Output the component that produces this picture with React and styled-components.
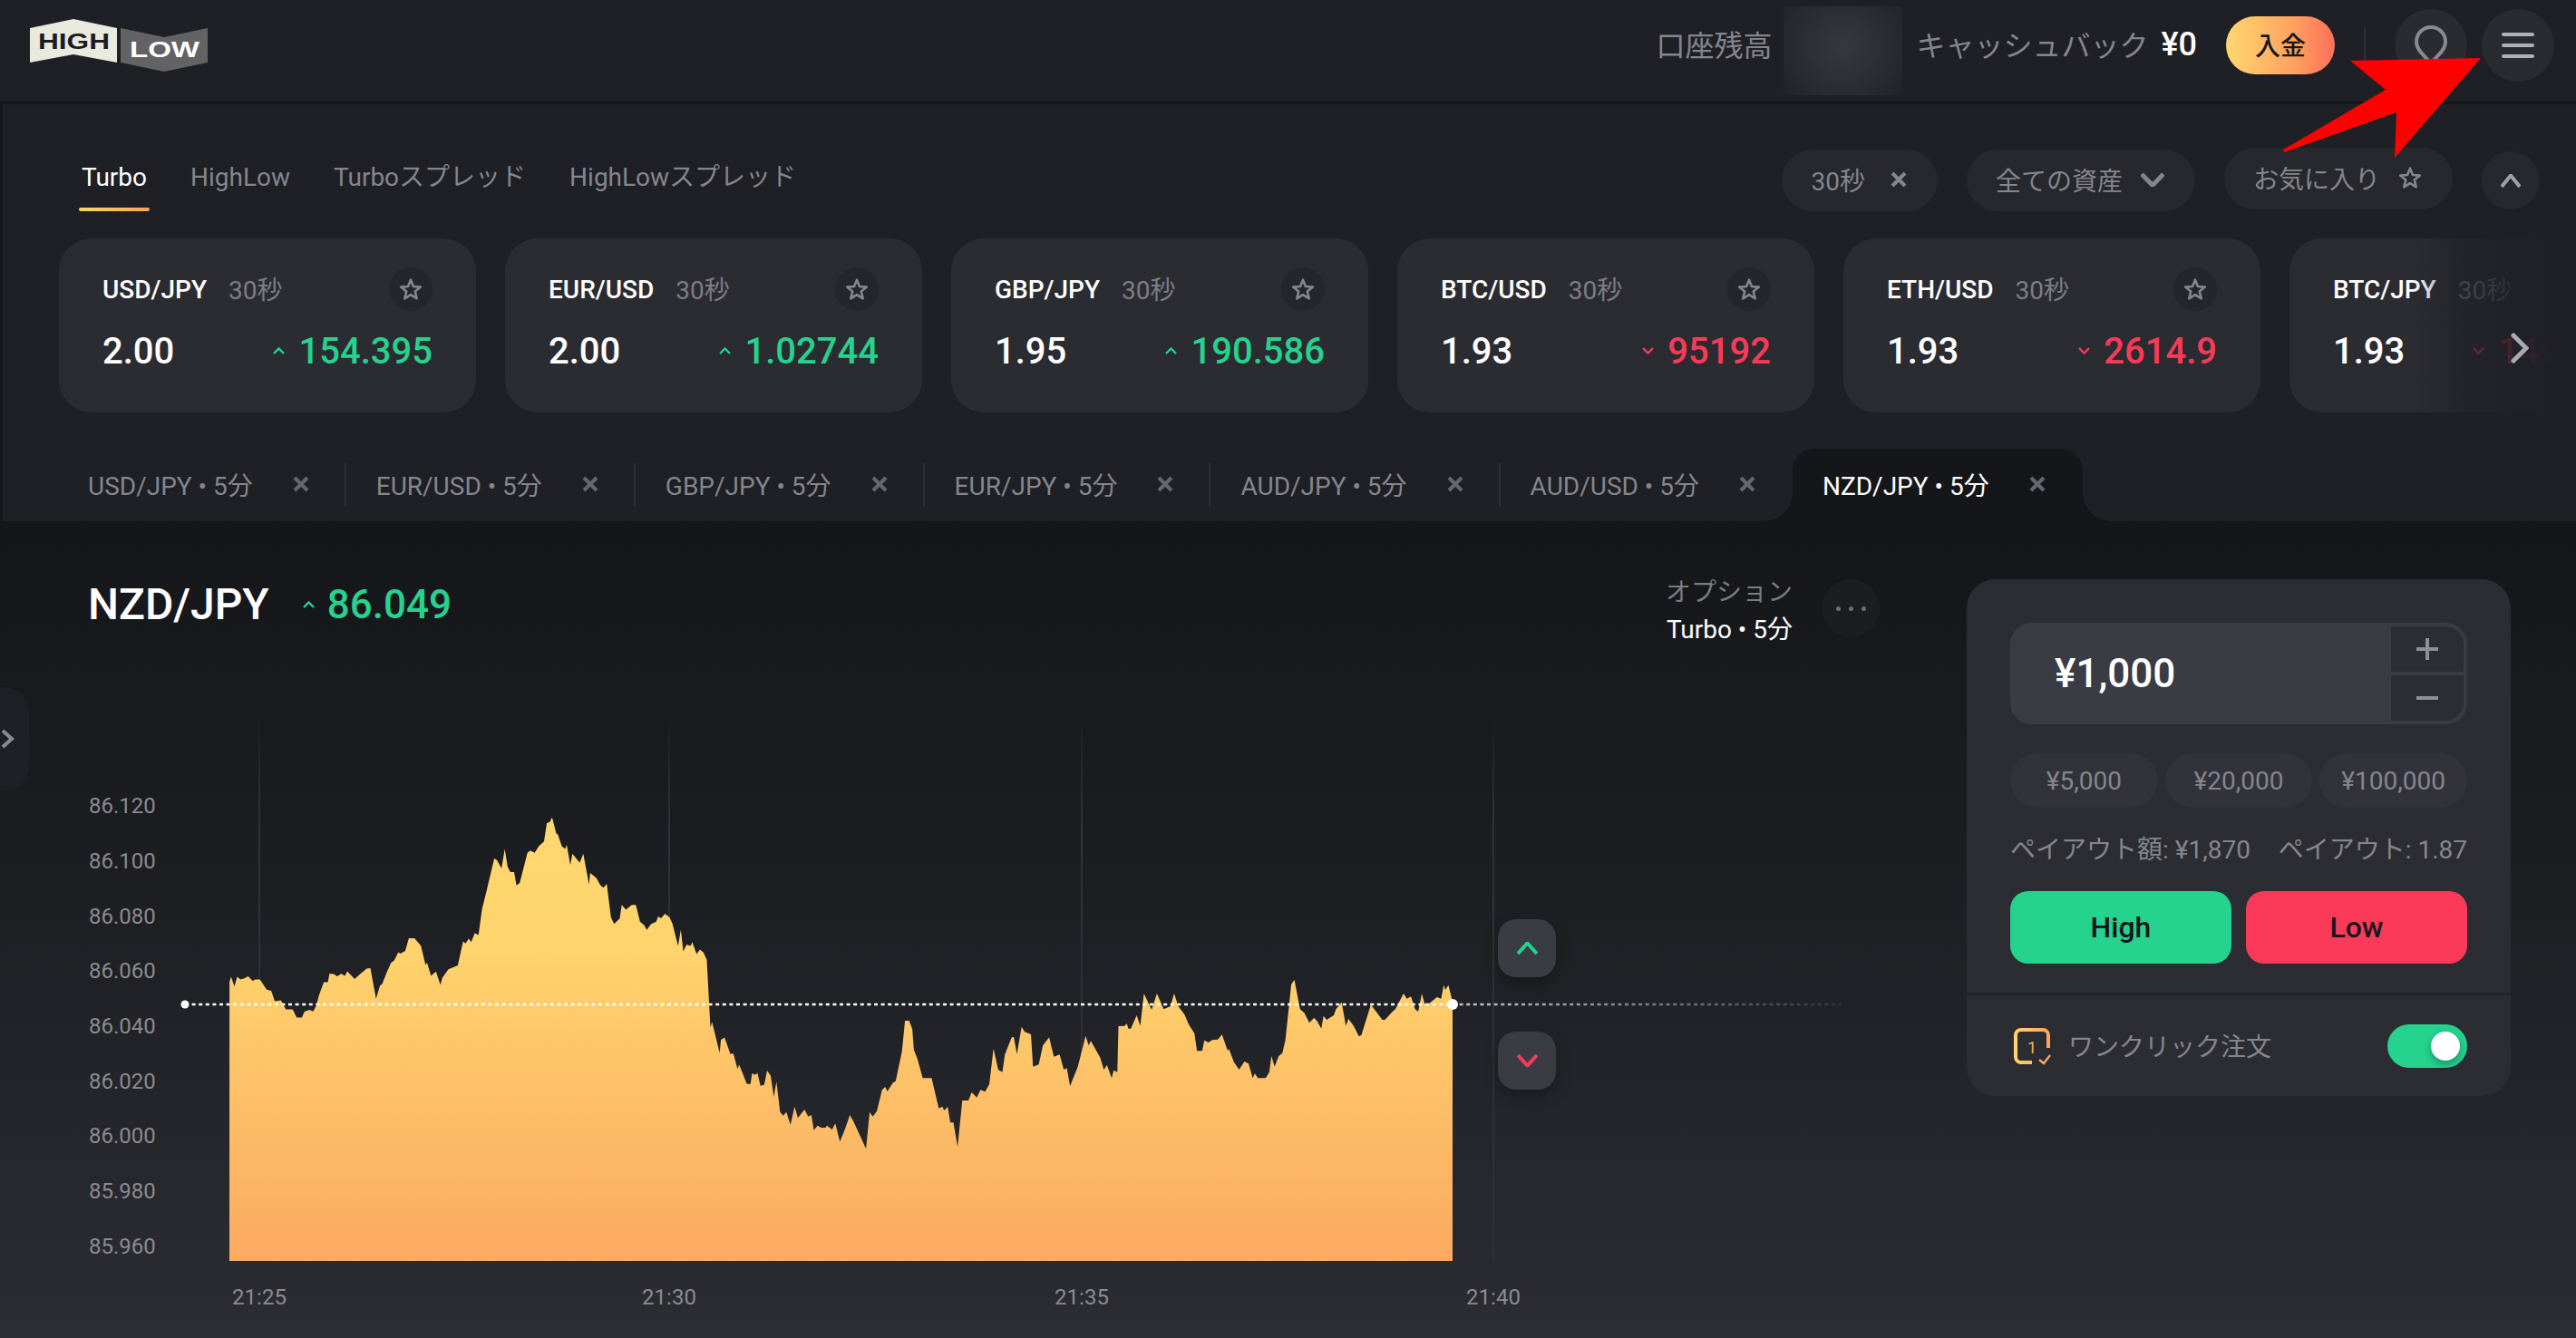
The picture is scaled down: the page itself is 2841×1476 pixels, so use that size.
import React from 'react';
import styled, { createGlobalStyle } from 'styled-components';

const GREEN = '#25d28e';
const RED = '#fb3a5a';
const GRAY = '#85868d';

const QUOTES = [
	{ pair: 'USD/JPY', rate: '2.00', price: '154.395', up: true },
	{ pair: 'EUR/USD', rate: '2.00', price: '1.02744', up: true },
	{ pair: 'GBP/JPY', rate: '1.95', price: '190.586', up: true },
	{ pair: 'BTC/USD', rate: '1.93', price: '95192', up: false },
	{ pair: 'ETH/USD', rate: '1.93', price: '2614.9', up: false },
	{ pair: 'BTC/JPY', rate: '1.93', price: '14935120', up: false },
];

const OPEN_TABS = ['USD/JPY', 'EUR/USD', 'GBP/JPY', 'EUR/JPY', 'AUD/JPY', 'AUD/USD'];

const Y_LABELS = [
	['86.120', 888],
	['86.100', 949],
	['86.080', 1010],
	['86.060', 1070],
	['86.040', 1131],
	['86.020', 1192],
	['86.000', 1252],
	['85.980', 1313],
	['85.960', 1374],
];

const X_LABELS = [
	['21:25', 286],
	['21:30', 738],
	['21:35', 1193],
	['21:40', 1647],
];

// price line, first half then second half, each in its own trace scale
const TRACE_A = [
	231, 680, 235, 665, 243, 695, 250, 665, 258, 673, 268, 670, 277, 664, 288, 678, 295, 673, 306, 673, 323, 705, 334, 708,
	343, 741, 358, 738, 370, 766, 387, 766, 397, 791, 410, 791, 416, 773, 428, 767, 438, 772, 445, 755, 452, 722, 464, 682,
	474, 682, 478, 655, 488, 657, 497, 664, 507, 656, 516, 662, 522, 648, 540, 672, 555, 655, 570, 640, 579, 638, 593, 733,
	603, 692, 608, 688, 620, 650, 630, 622, 638, 615, 648, 589, 653, 594, 665, 585, 674, 546, 688, 546, 704, 570, 715, 628,
	719, 622, 729, 662, 741, 649, 752, 690, 757, 668, 772, 642, 795, 630, 808, 556, 814, 562, 822, 547, 828, 558, 837, 530,
	846, 536, 855, 455, 865, 405, 885, 300, 892, 305, 903, 330, 911, 270, 918, 325, 925, 342, 934, 342, 940, 383, 948, 375,
	967, 282, 974, 275, 985, 282, 995, 262, 1008, 247, 1015, 190, 1022, 187, 1028, 173, 1038, 222, 1042, 225, 1052, 262,
	1060, 270, 1064, 258, 1073, 320, 1078, 285, 1096, 313, 1105, 285, 1119, 380, 1122, 344, 1137, 360, 1147, 382, 1155, 390,
	1163, 378, 1173, 480, 1181, 502, 1195, 485, 1200, 443, 1210, 458, 1225, 443, 1235, 443, 1245, 495, 1255, 505, 1262, 520,
	1272, 503, 1285, 495, 1290, 479, 1297, 484, 1307, 470, 1318, 482, 1325, 500, 1339, 570, 1346, 520, 1352, 587, 1360, 566,
	1370, 570, 1374, 558, 1385, 595, 1393, 581, 1402, 590, 1410, 613, 1416, 750, 1419, 822, 1423, 805, 1442, 900, 1445, 860,
	1454, 853, 1468, 903, 1476, 903, 1486, 950, 1490, 937, 1509, 996, 1518, 996, 1522, 963, 1530, 968, 1535, 962, 1543, 1002,
	1552, 998, 1559, 955,
];

const TRACE_B = [
	0, 680, 6, 750, 11, 700, 18, 800, 24, 812, 30, 800, 38, 842, 46, 782, 52, 820, 65, 792, 72, 815, 78, 810, 83, 860, 90, 845,
	97, 852, 105, 852, 108, 845, 118, 858, 124, 838, 133, 898, 142, 860, 152, 810, 160, 835, 172, 880, 183, 922, 190, 800,
	196, 815, 204, 797, 214, 727, 220, 717, 224, 732, 235, 703, 240, 698, 252, 600, 258, 498, 266, 498, 272, 525, 275, 595,
	282, 625, 292, 688, 309, 688, 323, 788, 330, 782, 333, 795, 340, 783, 345, 835, 351, 835, 359, 915, 368, 762, 380, 762,
	386, 735, 396, 752, 403, 727, 412, 733, 420, 708, 428, 590, 437, 660, 445, 668, 450, 610, 463, 553, 467, 552, 473, 608,
	482, 518, 488, 535, 500, 543, 504, 650, 515, 643, 523, 580, 535, 553, 544, 617, 555, 610, 563, 660, 569, 655, 575, 715,
	590, 650, 605, 548, 611, 580, 615, 565, 633, 620, 640, 660, 646, 645, 655, 688, 659, 662, 666, 668, 668, 516, 680, 515,
	684, 507, 687, 524, 692, 524, 703, 480, 710, 515, 717, 408, 732, 462, 742, 408, 755, 460, 768, 450, 775, 408, 783, 450,
	795, 478, 803, 510, 814, 540, 819, 598, 829, 598, 833, 563, 841, 570, 848, 562, 859, 560, 867, 544, 878, 598, 880, 590,
	890, 635, 900, 660, 910, 633, 918, 640, 926, 688, 930, 673, 936, 688, 951, 688, 958, 668, 962, 615, 968, 650, 976, 615,
	983, 605, 989, 560, 1000, 378, 1006, 362, 1017, 460, 1025, 472, 1035, 505, 1044, 488, 1050, 500, 1058, 524, 1062, 482,
	1068, 495, 1082, 480, 1086, 460, 1097, 437, 1105, 515, 1110, 492, 1120, 515, 1130, 550, 1135, 545, 1153, 445, 1175, 495,
	1180, 495, 1195, 467, 1200, 460, 1216, 408, 1222, 425, 1230, 418, 1238, 460, 1244, 468, 1251, 408, 1256, 440, 1262, 445,
	1280, 420, 1288, 425, 1293, 380, 1296, 396, 1302, 380, 1310, 435,
];

const toPoints = (flat, x0, sx, y0, sy) => {
	const pts = [];
	for (let i = 0; i < flat.length; i += 2) {
		pts.push(`${(x0 + flat[i] / sx).toFixed(1)},${(y0 + flat[i + 1] / sy).toFixed(1)}`);
	}
	return pts;
};

const PRICE_POINTS = [...toPoints(TRACE_A, 150, 2.24, 840, 2.8), ...toPoints(TRACE_B, 850, 1.742, 960, 3)];
const AREA = `M253,1391 L${PRICE_POINTS.join(' L')} L1602,1391 Z`;

const Caret = ({ up, w = 13, h = 8, width = 2.4, color }) => (
	<svg width={w} height={h} viewBox={`0 0 ${w} ${h}`} fill='none'>
		<polyline
			points={up ? `1,${h - 1} ${w / 2},1.5 ${w - 1},${h - 1}` : `1,1 ${w / 2},${h - 1.5} ${w - 1},1`}
			stroke={color}
			strokeWidth={width}
		/>
	</svg>
);

const CloseIcon = ({ color = '#66676d' }) => (
	<svg width='18' height='18' viewBox='0 0 18 18'>
		<path d='M2 2 L16 16 M16 2 L2 16' stroke={color} strokeWidth='4' />
	</svg>
);

const FavIcon = () => (
	<svg width='26' height='26' viewBox='0 0 24 24' fill='none'>
		<polygon
			points='12,2.5 14.7,9.3 22,9.8 16.4,14.4 18.2,21.5 12,17.6 5.8,21.5 7.6,14.4 2,9.8 9.3,9.3'
			stroke={GRAY}
			strokeWidth='2.4'
			strokeLinejoin='round'
		/>
	</svg>
);

const Logo = () => (
	<svg width='196' height='58' viewBox='33 21 196 58'>
		<path d='M33 31 L81 21 L129 31 V69 L81 60 L33 69 Z' fill='#e9e9dd' />
		<path d='M133 31 L181 41 L229 31 V69 L181 79 L133 69 Z' fill='#636365' />
		<LogoText x='42' y='54' textLength='79' lengthAdjust='spacingAndGlyphs' fill='#1b1c20'>
			HIGH
		</LogoText>
		<LogoText x='143' y='63' textLength='77' lengthAdjust='spacingAndGlyphs' fill='#ffffff'>
			LOW
		</LogoText>
	</svg>
);

const PinIcon = () => (
	<svg width='36' height='44' viewBox='0 0 36 44' fill='none'>
		<path
			d='M18 2 C9 2 2 9 2 18 C2 24 5 28 9 32 L18 42 L27 32 C31 28 34 24 34 18 C34 9 27 2 18 2 Z'
			stroke='#8a8b91'
			strokeWidth='4'
		/>
	</svg>
);

const OneClickIcon = () => (
	<OneClickSvg width='40' height='40' viewBox='0 0 40 40' fill='none'>
		<defs>
			<linearGradient id='oneClick' x1='0' y1='0' x2='1' y2='0'>
				<stop offset='0' stopColor='#ffd56d' />
				<stop offset='1' stopColor='#fba55f' />
			</linearGradient>
		</defs>
		<path
			d='M20 38 H8 A6 6 0 0 1 2 32 V8 A6 6 0 0 1 8 2 H32 A6 6 0 0 1 38 8 V22'
			stroke='url(#oneClick)'
			strokeWidth='4'
		/>
		<OneText x='20' y='28' textAnchor='middle'>
			1
		</OneText>
		<path d='M28 35 L33 39 L40 30' stroke='#fba55f' strokeWidth='2.4' />
	</OneClickSvg>
);

const PriceChart = () => (
	<ChartSvg width='2169' height='756' viewBox='0 720 2169 756'>
		<defs>
			<linearGradient id='area' x1='0' y1='902' x2='0' y2='1391' gradientUnits='userSpaceOnUse'>
				<stop offset='0' stopColor='#ffd86f' />
				<stop offset='0.3' stopColor='#ffd36d' />
				<stop offset='1' stopColor='#fbaa61' />
			</linearGradient>
			<linearGradient id='grid' x1='0' y1='780' x2='0' y2='900' gradientUnits='userSpaceOnUse'>
				<stop offset='0' stopColor='#303136' stopOpacity='0' />
				<stop offset='1' stopColor='#303136' />
			</linearGradient>
			<linearGradient id='lineFade' x1='1602' y1='0' x2='2030' y2='0' gradientUnits='userSpaceOnUse'>
				<stop offset='0' stopColor='#c8c8cc' />
				<stop offset='1' stopColor='#c8c8cc' stopOpacity='0.1' />
			</linearGradient>
		</defs>
		{X_LABELS.map(([, x]) => (
			<line key={x} x1={x} x2={x} y1='780' y2='1391' stroke='url(#grid)' strokeWidth='2' />
		))}
		<path d={AREA} fill='url(#area)' />
		<line x1='204' x2='1602' y1='1108' y2='1108' stroke='#ffffff' strokeWidth='2.5' strokeDasharray='4 3.6' />
		<line x1='1602' x2='2030' y1='1108' y2='1108' stroke='url(#lineFade)' strokeWidth='2.5' strokeDasharray='4 3.6' />
		<circle cx='204' cy='1108' r='4.5' fill='#ffffff' />
		<circle cx='1602' cy='1108' r='6' fill='#ffffff' />
		{Y_LABELS.map(([label, y]) => (
			<AxisText key={label} x='98' y={y + 9}>
				{label}
			</AxisText>
		))}
		{X_LABELS.map(([label, x]) => (
			<AxisText key={label} x={x} y='1439' textAnchor='middle'>
				{label}
			</AxisText>
		))}
	</ChartSvg>
);

const QuoteCard = ({ pair, rate, price, up }) => (
	<Card>
		<CardTop>
			<Pair>{pair}</Pair>
			<Period>30秒</Period>
			<StarButton>
				<FavIcon />
			</StarButton>
		</CardTop>
		<CardBottom>
			<Rate>{rate}</Rate>
			<Price $up={up}>
				<Caret up={up} color={up ? GREEN : RED} />
				{price}
			</Price>
		</CardBottom>
	</Card>
);

const App = () => {
	return (
		<Page>
			<GlobalStyle />
			<Header>
				<Logo />
				<HeaderRight>
					<Balance>口座残高</Balance>
					<BlurredAmount />
					<Balance>キャッシュバック</Balance>
					<Cashback>¥0</Cashback>
					<DepositButton>入金</DepositButton>
					<HeaderDivider />
					<RoundButton>
						<PinIcon />
					</RoundButton>
					<RoundButton>
						<MenuLines>
							<span />
							<span />
							<span />
						</MenuLines>
					</RoundButton>
				</HeaderRight>
			</Header>

			<Markets>
				<FilterRow>
					<ProductTabs>
						<ProductTab $active>Turbo</ProductTab>
						<ProductTab>HighLow</ProductTab>
						<ProductTab>Turboスプレッド</ProductTab>
						<ProductTab>HighLowスプレッド</ProductTab>
					</ProductTabs>
					<Filters>
						<Pill $gap={28}>
							30秒
							<CloseIcon color='#85868d' />
						</Pill>
						<Pill>
							全ての資産
							<Caret w={26} h={15} width={5} color='#85868d' />
						</Pill>
						<Pill $raised>
							お気に入り
							<FavIcon />
						</Pill>
						<CollapseButton>
							<Caret up w={22} h={15} width={4} color='#a0a1a7' />
						</CollapseButton>
					</Filters>
				</FilterRow>

				<CardRow>
					{QUOTES.map((quote) => (
						<QuoteCard key={quote.pair} {...quote} />
					))}
					<CardFade />
					<NextButton>
						<svg width='20' height='34' viewBox='0 0 20 34' fill='none'>
							<polyline points='3,3 17,17 3,31' stroke='#aaabaf' strokeWidth='5' strokeLinecap='round' />
						</svg>
					</NextButton>
				</CardRow>

				<TabStrip>
					{OPEN_TABS.map((name, i) => (
						<React.Fragment key={name}>
							<OpenTab>
								{name} • 5分
								<CloseIcon />
							</OpenTab>
							{i < OPEN_TABS.length - 1 && <TabDivider />}
						</React.Fragment>
					))}
					<ActiveTab>
						NZD/JPY • 5分
						<CloseIcon />
					</ActiveTab>
				</TabStrip>
			</Markets>

			<Trading>
				<SideHandle>
					<svg width='16' height='22' viewBox='0 0 16 22' fill='none'>
						<polyline points='3,2 13,11 3,20' stroke='#8a8b91' strokeWidth='4' />
					</svg>
				</SideHandle>
				<ChartColumn>
					<ChartHead>
						<TitleGroup>
							<ChartTitle>NZD/JPY</ChartTitle>
							<ChartPrice>
								<Caret up color={GREEN} />
								86.049
							</ChartPrice>
						</TitleGroup>
						<OptionInfo>
							<OptionLabel>オプション</OptionLabel>
							<OptionValue>Turbo • 5分</OptionValue>
						</OptionInfo>
						<MoreButton>
							<span />
							<span />
							<span />
						</MoreButton>
					</ChartHead>
					<ChartWrap>
						<PriceChart />
						<MiniTrade $top={294}>
							<Caret up w={23} h={14} width={4} color={GREEN} />
						</MiniTrade>
						<MiniTrade $top={418}>
							<Caret w={23} h={14} width={4} color={RED} />
						</MiniTrade>
					</ChartWrap>
				</ChartColumn>

				<TradePanel>
					<PanelBody>
						<AmountBox>
							<Amount>¥1,000</Amount>
							<Stepper>
								<StepButton $plus>
									<svg width='24' height='24' viewBox='0 0 24 24'>
										<path d='M0 12 H24 M12 0 V24' stroke='#8f9096' strokeWidth='4' />
									</svg>
								</StepButton>
								<StepButton>
									<svg width='24' height='4' viewBox='0 0 24 4'>
										<path d='M0 2 H24' stroke='#8f9096' strokeWidth='4' />
									</svg>
								</StepButton>
							</Stepper>
						</AmountBox>
						<Presets>
							<Preset>¥5,000</Preset>
							<Preset>¥20,000</Preset>
							<Preset>¥100,000</Preset>
						</Presets>
						<Payout>
							<span>ペイアウト額: ¥1,870</span>
							<span>ペイアウト: 1.87</span>
						</Payout>
						<TradeButtons>
							<TradeButton $color={GREEN}>High</TradeButton>
							<TradeButton $color={RED}>Low</TradeButton>
						</TradeButtons>
					</PanelBody>
					<PanelFooter>
						<OneClickIcon />
						<OneClickLabel>ワンクリック注文</OneClickLabel>
						<Toggle>
							<Knob />
						</Toggle>
					</PanelFooter>
				</TradePanel>
			</Trading>

			<ArrowOverlay width='240' height='120' viewBox='2510 60 240 120'>
				<polygon points='2736,64 2592,67 2631,99 2518,165 2519,168 2643,124 2641,174' fill='#ff0000' />
			</ArrowOverlay>
		</Page>
	);
};

export default App;

const GlobalStyle = createGlobalStyle`
	* {
		box-sizing: border-box;
	}
	html, body {
		margin: 0;
		background: #1e2025;
	}
	body {
		font-family: Roboto, 'Noto Sans CJK JP', sans-serif;
		overflow: hidden;
	}
`;

const Page = styled.div`
	position: relative;
	width: 2841px;
	height: 1476px;
	display: flex;
	flex-direction: column;
	background: #1e2025;
	overflow: hidden;
`;

const LogoText = styled.text`
	font-family: 'Liberation Sans', sans-serif;
	font-weight: 700;
	font-size: 24px;
`;

const OneClickSvg = styled.svg`
	overflow: visible;
	flex-shrink: 0;
`;

const OneText = styled.text`
	font-size: 18px;
	fill: #f8b15f;
`;

const ChartSvg = styled.svg`
	display: block;
`;

const AxisText = styled.text`
	font-size: 24px;
	fill: #8a8b91;
`;

const Header = styled.header`
	height: 115px;
	flex-shrink: 0;
	display: flex;
	align-items: center;
	justify-content: space-between;
	padding: 0 24px 12px 33px;
	border-bottom: 3px solid #15161a;
`;

const HeaderRight = styled.div`
	display: flex;
	align-items: center;
`;

const Balance = styled.span`
	margin-bottom: 5px;
	font-size: 32px;
	color: ${GRAY};
`;

const BlurredAmount = styled.div`
	width: 131px;
	height: 98px;
	margin: 12px 15px 0 13px;
	background: radial-gradient(circle at 50% 45%, #37383d 0%, #2f3035 40%, #212328 100%);
`;

const Cashback = styled.span`
	margin: 0 32px 2px 14px;
	font-size: 36px;
	font-weight: 500;
	color: #ffffff;
`;

const DepositButton = styled.button`
	width: 120px;
	height: 64px;
	padding: 0 0 3px;
	border: 0;
	border-radius: 32px;
	font: inherit;
	font-size: 28px;
	font-weight: 500;
	color: #16171b;
	background: linear-gradient(90deg, #ffd76f 0%, #ffa460 60%, #ff6f5a 100%);
`;

const HeaderDivider = styled.div`
	width: 2px;
	height: 42px;
	margin: 0 16px 0 32px;
	background: #2e2f35;
`;

const RoundButton = styled.div`
	width: 80px;
	height: 80px;
	margin-left: 16px;
	border-radius: 50%;
	display: flex;
	align-items: center;
	justify-content: center;
	background: #2a2b30;
`;

const MenuLines = styled.div`
	display: flex;
	flex-direction: column;
	gap: 8px;
	span {
		display: block;
		width: 36px;
		height: 4px;
		border-radius: 2px;
		background: #b0b1b8;
	}
`;

const Markets = styled.section`
	flex-shrink: 0;
	padding-top: 50px;
	border-left: 3px solid #15161a;
`;

const FilterRow = styled.div`
	display: flex;
	align-items: center;
	justify-content: space-between;
	height: 68px;
	padding: 0 40px 0 84px;
`;

const ProductTabs = styled.nav`
	display: flex;
	gap: 42px;
	height: 68px;
`;

const ProductTab = styled.div`
	position: relative;
	padding: 12px 3px 0;
	font-size: 28px;
	line-height: 38px;
	color: ${(p) => (p.$active ? '#ffffff' : GRAY)};
	&::after {
		content: '';
		display: ${(p) => (p.$active ? 'block' : 'none')};
		position: absolute;
		left: 0;
		right: 0;
		bottom: 0;
		height: 4px;
		border-radius: 2px;
		background: linear-gradient(90deg, #ffd56d, #ffa25d);
	}
`;

const Filters = styled.div`
	display: flex;
	align-items: center;
	gap: 32px;
`;

const Pill = styled.div`
	height: 68px;
	padding: 0 34px 2px 32px;
	margin-bottom: ${(p) => (p.$raised ? '4px' : '0')};
	display: flex;
	align-items: center;
	gap: ${(p) => p.$gap || 20}px;
	border-radius: 34px;
	font-size: 28px;
	color: ${GRAY};
	background: #26282d;
`;

const CollapseButton = styled.div`
	width: 64px;
	height: 64px;
	border-radius: 50%;
	display: flex;
	align-items: center;
	justify-content: center;
	background: #26282d;
`;

const CardRow = styled.div`
	position: relative;
	display: flex;
	gap: 32px;
	height: 192px;
	margin-top: 30px;
	padding-left: 62px;
	overflow: hidden;
`;

const Card = styled.article`
	flex: 0 0 460px;
	height: 192px;
	padding: 32px 48px 0;
	border-radius: 36px;
	background: #2b2c32;
`;

const CardTop = styled.div`
	display: flex;
	align-items: center;
	height: 48px;
`;

const Pair = styled.span`
	font-size: 28px;
	font-weight: 500;
	color: #ffffff;
`;

const Period = styled.span`
	margin-left: 24px;
	padding-bottom: 2px;
	font-size: 28px;
	color: #7c7d84;
`;

const StarButton = styled.div`
	width: 48px;
	height: 48px;
	margin-left: auto;
	border-radius: 50%;
	display: flex;
	align-items: center;
	justify-content: center;
	background: #25262b;
`;

const CardBottom = styled.div`
	display: flex;
	align-items: center;
	justify-content: space-between;
	height: 48px;
	margin-top: 20px;
`;

const Rate = styled.span`
	font-size: 40px;
	font-weight: 500;
	color: #ffffff;
`;

const Price = styled.span`
	display: flex;
	align-items: center;
	gap: 15px;
	font-size: 40px;
	font-weight: 500;
	color: ${(p) => (p.$up ? GREEN : RED)};
`;

const CardFade = styled.div`
	position: absolute;
	top: 0;
	right: 0;
	bottom: 0;
	width: 180px;
	background: linear-gradient(
		90deg,
		rgba(30, 32, 37, 0) 0%,
		rgba(30, 32, 37, 0.6) 30%,
		rgba(30, 32, 37, 0.85) 60%,
		#1e2025 85%
	);
`;

const NextButton = styled.div`
	position: absolute;
	top: 104px;
	left: 2766px;
	display: flex;
`;

const TabStrip = styled.div`
	display: flex;
	align-items: center;
	height: 120px;
	padding: 40px 0 0 61px;
`;

const OpenTab = styled.div`
	display: flex;
	align-items: center;
	gap: 44px;
	padding: 0 39px 2px 33px;
	font-size: 28px;
	color: ${GRAY};
	white-space: pre;
`;

const TabDivider = styled.div`
	width: 2px;
	height: 48px;
	background: #2e2f35;
`;

const ActiveTab = styled.div`
	position: relative;
	height: 80px;
	width: 320px;
	margin-left: 2px;
	display: flex;
	align-items: center;
	gap: 44px;
	padding: 0 0 2px 33px;
	border-radius: 24px 24px 0 0;
	font-size: 28px;
	color: #ffffff;
	background: #15161a;
	&::before,
	&::after {
		content: '';
		position: absolute;
		bottom: 0;
		width: 32px;
		height: 32px;
	}
	&::before {
		left: -32px;
		background: radial-gradient(circle at 0 0, transparent 31.5px, #15161a 32px);
	}
	&::after {
		right: -32px;
		background: radial-gradient(circle at 100% 0, transparent 31.5px, #15161a 32px);
	}
`;

const Trading = styled.main`
	position: relative;
	flex: 1;
	display: flex;
	padding-top: 64px;
	background: linear-gradient(180deg, #15161a 0%, #1c1d21 40%, #2c2d32 100%);
`;

const SideHandle = styled.div`
	position: absolute;
	left: 0;
	top: 183px;
	width: 32px;
	height: 114px;
	display: flex;
	align-items: center;
	border-radius: 0 28px 28px 0;
	background: #1e2025;
`;

const ChartColumn = styled.div`
	flex: 0 0 2169px;
	display: flex;
	flex-direction: column;
`;

const ChartHead = styled.div`
	display: flex;
	align-items: center;
	height: 64px;
	padding: 0 96px 0 97px;
`;

const TitleGroup = styled.div`
	display: flex;
	align-items: center;
	gap: 37px;
	margin: 0 auto 8px 0;
`;

const ChartTitle = styled.h1`
	margin: 0;
	font-size: 48px;
	font-weight: 500;
	line-height: 54px;
	color: #ffffff;
`;

const ChartPrice = styled.div`
	display: flex;
	align-items: center;
	gap: 14px;
	font-size: 44px;
	font-weight: 500;
	color: ${GREEN};
`;

const OptionInfo = styled.div`
	text-align: right;
	font-size: 28px;
	line-height: 41px;
	margin: 5px 32px 0 0;
`;

const OptionLabel = styled.div`
	color: #7c7d84;
`;

const OptionValue = styled.div`
	color: #ffffff;
`;

const MoreButton = styled.div`
	width: 64px;
	height: 64px;
	border-radius: 50%;
	display: flex;
	align-items: center;
	justify-content: center;
	gap: 9px;
	background: #1c1d21;
	span {
		width: 5px;
		height: 5px;
		border-radius: 50%;
		background: #6e6f75;
	}
`;

const ChartWrap = styled.div`
	position: relative;
	margin-top: 17px;
`;

const MiniTrade = styled.div`
	position: absolute;
	left: 1652px;
	top: ${(p) => p.$top}px;
	width: 64px;
	height: 64px;
	display: flex;
	align-items: center;
	justify-content: center;
	border-radius: 20px;
	background: #3a3c44;
	box-shadow: 0 8px 16px rgba(0, 0, 0, 0.25);
`;

const TradePanel = styled.aside`
	width: 600px;
	height: 570px;
	border-radius: 32px;
	overflow: hidden;
	background: #2c2d33;
`;

const PanelBody = styled.div`
	padding: 48px 48px 32px;
`;

const AmountBox = styled.div`
	display: flex;
	align-items: center;
	justify-content: space-between;
	height: 112px;
	padding: 4px 4px 4px 49px;
	border-radius: 24px;
	background: #3a3c44;
`;

const Amount = styled.span`
	font-size: 44px;
	font-weight: 500;
	color: #ffffff;
`;

const Stepper = styled.div`
	display: flex;
	flex-direction: column;
	gap: 4px;
	width: 80px;
	height: 104px;
`;

const StepButton = styled.div`
	flex: 1;
	display: flex;
	align-items: center;
	justify-content: center;
	background: #2c2d33;
	border-radius: ${(p) => (p.$plus ? '0 20px 0 0' : '0 0 20px 0')};
`;

const Presets = styled.div`
	display: grid;
	grid-template-columns: repeat(3, 1fr);
	gap: 8px;
	margin-top: 32px;
`;

const Preset = styled.div`
	height: 60px;
	display: flex;
	align-items: center;
	justify-content: center;
	border-radius: 30px;
	font-size: 28px;
	color: ${GRAY};
	background: #32333a;
`;

const Payout = styled.div`
	display: flex;
	justify-content: space-between;
	margin-top: 30px;
	font-size: 28px;
	line-height: 34px;
	color: ${GRAY};
	white-space: nowrap;
`;

const TradeButtons = styled.div`
	display: grid;
	grid-template-columns: 1fr 1fr;
	gap: 16px;
	margin-top: 28px;
`;

const TradeButton = styled.div`
	height: 80px;
	display: flex;
	align-items: center;
	justify-content: center;
	border-radius: 20px;
	font-size: 32px;
	font-weight: 500;
	color: #15161a;
	background: ${(p) => p.$color};
`;

const PanelFooter = styled.div`
	display: flex;
	align-items: center;
	height: 115px;
	padding: 0 48px 0 52px;
	border-top: 3px solid #222328;
`;

const OneClickLabel = styled.span`
	margin: 0 0 2px 20px;
	font-size: 28px;
	color: ${GRAY};
`;

const Toggle = styled.div`
	width: 88px;
	height: 48px;
	margin-left: auto;
	padding: 8px;
	display: flex;
	justify-content: flex-end;
	border-radius: 24px;
	background: ${GREEN};
`;

const Knob = styled.div`
	width: 32px;
	height: 32px;
	border-radius: 50%;
	background: #ffffff;
	box-shadow: 0 4px 8px rgba(0, 0, 0, 0.3);
`;

const ArrowOverlay = styled.svg`
	position: absolute;
	left: 2510px;
	top: 60px;
	pointer-events: none;
`;
